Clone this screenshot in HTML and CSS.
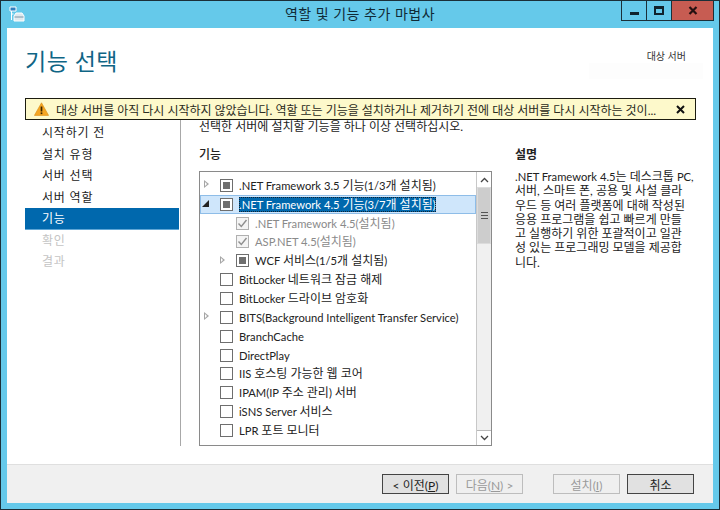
FILE: index.html
```html
<!DOCTYPE html>
<html lang="ko">
<head>
<meta charset="utf-8">
<title>역할 및 기능 추가 마법사</title>
<link rel="stylesheet" href="styles.css">
</head>
<body>
<div class="window">
  <div class="titlebar">
    <svg class="app-icon" width="16" height="16" viewBox="0 0 16 16"><path d="M1 1h6v4H1z" fill="#2f7fc0" stroke="#fff"/><path d="M2.500 5v9M2.500 8h2" stroke="#fff" fill="none"/><path d="M5 10l2-3h6l2 3v5H5z" fill="#dfe9ee" stroke="#fff"/><path d="M5.500 11h9" stroke="#7a96a8"/></svg>
    <div class="title">역할 및 기능 추가 마법사</div>
    <div class="winbtns">
      <div class="winbtn"><span class="min-glyph"></span></div>
      <div class="winbtn"><span class="max-glyph"></span></div>
      <div class="winbtn close"><svg width="10" height="9" viewBox="0 0 10 9"><path d="M1.500 1l7 7M8.500 1l-7 7" stroke="#241010" stroke-width="2.200" fill="none"/></svg></div>
    </div>
  </div>
  <div class="client">
    <header class="head">
      <h1>기능 선택</h1>
      <div class="target">
        <div class="target-label">대상 서버</div>
        <div class="target-value"></div>
      </div>
    </header>
    <div class="banner">
      <svg class="warn" width="15" height="14" viewBox="0 0 15 14"><path d="M7.500 .8L14.600 13.400H.4z" fill="#f5a623" stroke="#d98a10" stroke-width=".6"/><path d="M7.500 4.500v5" stroke="#3a2500" stroke-width="1.700"/><path d="M7.500 10.400v1.700" stroke="#3a2500" stroke-width="1.700"/></svg>
      <span class="banner-text">대상 서버를 아직 다시 시작하지 않았습니다. 역할 또는 기능을 설치하거나 제거하기 전에 대상 서버를 다시 시작하는 것이...</span>
      <svg class="banner-x" width="9" height="9" viewBox="0 0 9 9"><path d="M1 1l7 7M8 1l-7 7" stroke="#111" stroke-width="2" fill="none"/></svg>
    </div>
    <div class="content">
      <nav class="nav">
        <div class="nav-item">시작하기 전</div>
        <div class="nav-item">설치 유형</div>
        <div class="nav-item">서버 선택</div>
        <div class="nav-item">서버 역할</div>
        <div class="nav-item active">기능</div>
        <div class="nav-item off">확인</div>
        <div class="nav-item off">결과</div>
      </nav>
      <main class="pane">
        <p class="intro">선택한 서버에 설치할 기능을 하나 이상 선택하십시오.</p>
        <div class="columns">
          <section class="features">
            <h2>기능</h2>
            <div class="listbox">
              <div class="tree">
                <div class="row"><span class="arrow open-r"></span><span class="box part"></span><span class="label"><span class="en">.NET Framework 3.5 </span>기능<span class="en">(1/3</span>개 설치됨<span class="en">)</span></span></div>
                <div class="row current"><span class="arrow down"></span><span class="box part"></span><span class="label sel"><span class="en">.NET Framework 4.5 </span>기능<span class="en">(3/7</span>개 설치됨<span class="en">)</span></span></div>
                <div class="row lvl2 dim"><span class="box chk"><svg width="11" height="11" viewBox="0 0 11 11"><path d="M1.500 5.500l2.800 3L9.500 2" stroke="#8f8f8f" stroke-width="1.400" fill="none"/></svg></span><span class="label"><span class="en">.NET Framework 4.5(</span>설치됨<span class="en">)</span></span></div>
                <div class="row lvl2 dim"><span class="box chk"><svg width="11" height="11" viewBox="0 0 11 11"><path d="M1.500 5.500l2.800 3L9.500 2" stroke="#8f8f8f" stroke-width="1.400" fill="none"/></svg></span><span class="label"><span class="en">ASP.NET 4.5(</span>설치됨<span class="en">)</span></span></div>
                <div class="row lvl1"><span class="arrow open-r"></span><span class="box part"></span><span class="label"><span class="en">WCF </span>서비스<span class="en">(1/5</span>개 설치됨<span class="en">)</span></span></div>
                <div class="row"><span class="arrow none"></span><span class="box"></span><span class="label"><span class="en">BitLocker </span>네트워크 잠금 해제</span></div>
                <div class="row"><span class="arrow none"></span><span class="box"></span><span class="label"><span class="en">BitLocker </span>드라이브 암호화</span></div>
                <div class="row"><span class="arrow open-r"></span><span class="box"></span><span class="label en">BITS(Background Intelligent Transfer Service)</span></div>
                <div class="row"><span class="arrow none"></span><span class="box"></span><span class="label en">BranchCache</span></div>
                <div class="row"><span class="arrow none"></span><span class="box"></span><span class="label en">DirectPlay</span></div>
                <div class="row"><span class="arrow none"></span><span class="box"></span><span class="label"><span class="en">IIS </span>호스팅 가능한 웹 코어</span></div>
                <div class="row"><span class="arrow none"></span><span class="box"></span><span class="label"><span class="en">IPAM(IP </span>주소 관리<span class="en">) </span>서버</span></div>
                <div class="row"><span class="arrow none"></span><span class="box"></span><span class="label"><span class="en">iSNS Server </span>서비스</span></div>
                <div class="row"><span class="arrow none"></span><span class="box"></span><span class="label"><span class="en">LPR </span>포트 모니터</span></div>
              </div>
              <div class="scrollbar">
                <div class="sb-btn"><svg width="9" height="6" viewBox="0 0 9 6"><path d="M1 5l3.500-3.500L8 5" stroke="#444" stroke-width="1.300" fill="none"/></svg></div>
                <div class="sb-thumb"><span class="grip"></span></div>
                <div class="sb-track"></div>
                <div class="sb-btn"><svg width="9" height="6" viewBox="0 0 9 6"><path d="M1 1l3.500 3.500L8 1" stroke="#444" stroke-width="1.300" fill="none"/></svg></div>
              </div>
            </div>
          </section>
          <aside class="desc">
            <h2>설명</h2>
            <p><span class="en">.NET Framework 4.5</span>는 데스크톱 <span class="en">PC,</span><br>서버, 스마트 폰, 공용 및 사설 클라<br>우드 등 여러 플랫폼에 대해 작성된<br>응용 프로그램을 쉽고 빠르게 만들<br>고 실행하기 위한 포괄적이고 일관<br>성 있는 프로그래밍 모델을 제공합<br>니다.</p>
          </aside>
        </div>
      </main>
    </div>
    <footer class="footer">
      <div class="btn"><span>&lt; 이전(<u>P</u>)</span></div>
      <div class="btn disabled"><span>다음(<u>N</u>) &gt;</span></div>
      <div class="btn disabled install"><span>설치(<u>I</u>)</span></div>
      <div class="btn"><span>취소</span></div>
    </footer>
  </div>
</div>
</body>
</html>
```
FILE: styles.css
```css
* { box-sizing: border-box; }
html, body { margin: 0; padding: 0; }
body {
  width: 720px;
  height: 510px;
  overflow: hidden;
  font-family: Lato, "Noto Sans CJK KR", sans-serif;
  font-size: 12px;
  color: #1e1e1e;
}
.en { font-size: 11.200px; }
.window {
  width: 720px;
  height: 510px;
  display: flex;
  flex-direction: column;
  background: #65c9ea;
  border: 1px solid #1b2f38;
  padding: 0 6px 6px 6px;
}
.titlebar {
  height: 27px;
  flex: none;
  display: flex;
  align-items: flex-start;
  position: relative;
}
.app-icon { margin: 5px 0 0 2px; flex: none; }
.title {
  position: absolute;
  left: 0;
  right: 0;
  top: 2px;
  text-align: center;
  font-size: 14px;
  line-height: 22px;
  color: #102a36;
  letter-spacing: 0.5px;
}
.winbtns {
  margin-left: auto;
  margin-right: -1px;
  display: flex;
  height: 20px;
  border: 1px solid #1b2f38;
  border-top: 0;
  position: relative;
}
.winbtn {
  width: 25px;
  display: flex;
  align-items: center;
  justify-content: center;
  border-right: 1px solid #1b2f38;
}
.winbtn.close { width: 41px; background: #c75c52; border-right: 0; }
.min-glyph { width: 9px; height: 3px; background: #10232c; margin-top: 5px; }
.max-glyph { width: 10px; height: 9px; border: 2px solid #10232c; border-top-width: 3px; margin-top: -1px; }
.client {
  flex: 1;
  min-height: 0;
  background: #fff;
  display: flex;
  flex-direction: column;
}
.head {
  height: 70px;
  flex: none;
  display: flex;
  justify-content: space-between;
  padding: 0 10px 0 18px;
}
h1 {
  margin: 16px 0 0;
  font-size: 23px;
  font-weight: 400;
  line-height: 34px;
  color: #0f6585;
  letter-spacing: 0.5px;
}
.target { width: 114px; padding-top: 21px; }
.target-label { font-size: 10px; line-height: 14px; text-align: right; padding-right: 17px; color: #333; }
.target-value { height: 16px; margin-top: 0; background: #fdfdfd; }
.banner {
  flex: none;
  height: 22px;
  margin: 0 17px 0 18px;
  border: 1px solid #1c1c10;
  background: #fdf9cb;
  display: flex;
  align-items: center;
  padding: 0 10px 0 8px;
  position: relative;
  z-index: 1;
}
.warn { flex: none; margin-right: 7px; }
.banner-text { flex: 1; white-space: nowrap; overflow: hidden; font-size: 12px; color: #2a2a20; letter-spacing: -0.02px; }
.banner-x { flex: none; }
.content { flex: 1; min-height: 0; display: flex; }
.nav { width: 155px; margin-left: 18px; flex: none; padding-top: 2px; }
.nav-item {
  height: 21.500px;
  line-height: 21.500px;
  padding-left: 17px;
  font-size: 12px;
  color: #222;
  letter-spacing: 0.8px;
}
.nav-item.active { background: #0068ad; color: #fff; border-bottom: 1px solid #5ea6d6; width: 154px; }
.nav-item.off { color: #c4c4c4; }
.pane {
  flex: 1;
  min-width: 0;
  margin-bottom: 18px;
  border-left: 1px solid #a8a8a8;
  padding-left: 18px;
}
.intro { margin: 0; height: 14px; line-height: 14px; font-size: 12px; white-space: nowrap; color: #222; }
.columns { display: flex; }
.features { width: 293px; flex: none; }
h2 {
  margin: 0;
  font-size: 12px;
  font-weight: 500;
  line-height: 16px;
  color: #222;
}
.features h2 { margin-top: 13px; height: 24px; }
.listbox {
  width: 293px;
  height: 275px;
  border: 1px solid #8a8a8a;
  display: flex;
  background: #fff;
}
.tree { flex: 1; min-width: 0; padding-top: 4px; }
.row {
  height: 18.850px;
  display: flex;
  align-items: center;
  font-size: 12px;
  white-space: nowrap;
  color: #222;
}
.row.current { background: #cfe6fb; box-shadow: inset 0 0 0 1px #8ebde8; }
.row.lvl1 { padding-left: 16px; }
.row.lvl2 { padding-left: 36px; }
.row.dim { color: #8a8a8a; }
.arrow { width: 20px; height: 12px; flex: none; position: relative; }
.arrow.open-r::before {
  content: "";
  position: absolute;
  left: 4px;
  top: 1px;
  border-style: solid;
  border-width: 4.500px 0 4.500px 5px;
  border-color: transparent transparent transparent #a6a6a6;
}
.arrow.open-r::after {
  content: "";
  position: absolute;
  left: 5px;
  top: 3px;
  border-style: solid;
  border-width: 2.500px 0 2.500px 2.800px;
  border-color: transparent transparent transparent #fff;
}
.arrow.down::before {
  content: "";
  position: absolute;
  left: 2px;
  top: 2px;
  border-style: solid;
  border-width: 0 0 7px 7px;
  border-color: transparent transparent #222 transparent;
}
.box {
  width: 13px;
  height: 13px;
  flex: none;
  border: 1px solid #6e6e6e;
  background: #fff;
  margin-right: 6px;
  display: flex;
  align-items: center;
  justify-content: center;
}
.box.part::before { content: ""; width: 7px; height: 7px; background: #6f6f6f; }
.box.chk { border-color: #b0b0b0; background: #f4f4f4; }
.label { line-height: 15px; }
.label.sel { background: #0068ad; color: #fff; outline: 1px dotted #123; outline-offset: -1px; }
.scrollbar {
  width: 15px;
  flex: none;
  border-left: 1px solid #c8c8c8;
  display: flex;
  flex-direction: column;
  background: #f0f0f0;
}
.sb-btn { height: 15px; flex: none; background: #fff; display: flex; align-items: center; justify-content: center; }
.sb-btn:last-child { border-top: 1px solid #b8b8b8; }
.sb-thumb { height: 57px; flex: none; background: #cdcdcd; display: flex; align-items: center; justify-content: center; border: 1px solid #dcdcdc; }
.grip { width: 7px; height: 7px; border-top: 1px solid #555; border-bottom: 1px solid #555; position: relative; }
.grip::before { content: ""; position: absolute; left: 0; right: 0; top: 2px; height: 1px; background: #555; }
.sb-track { flex: 1; }
.desc { margin-left: 23px; width: 195px; }
.desc h2 { margin-top: 13px; font-weight: 700; }
.desc p { margin: 7px 0 0; font-size: 12px; line-height: 14.300px; color: #222; white-space: nowrap; }
.footer {
  flex: none;
  height: 39px;
  border-top: 1px solid #dfdfdf;
  background: #f0f0f0;
  display: flex;
  align-items: flex-start;
  padding: 9px 17px 0 375px;
  gap: 7px;
}
.btn {
  width: 67px;
  height: 20px;
  border: 1px solid #444;
  background: #e1e1e1;
  display: flex;
  align-items: center;
  justify-content: center;
  font-size: 12px;
  color: #1e1e1e;
}
.btn.disabled { border-color: #bdbdbd; background: #efefef; color: #9a9a9a; }
.btn.install { margin-left: 23px; }
```
